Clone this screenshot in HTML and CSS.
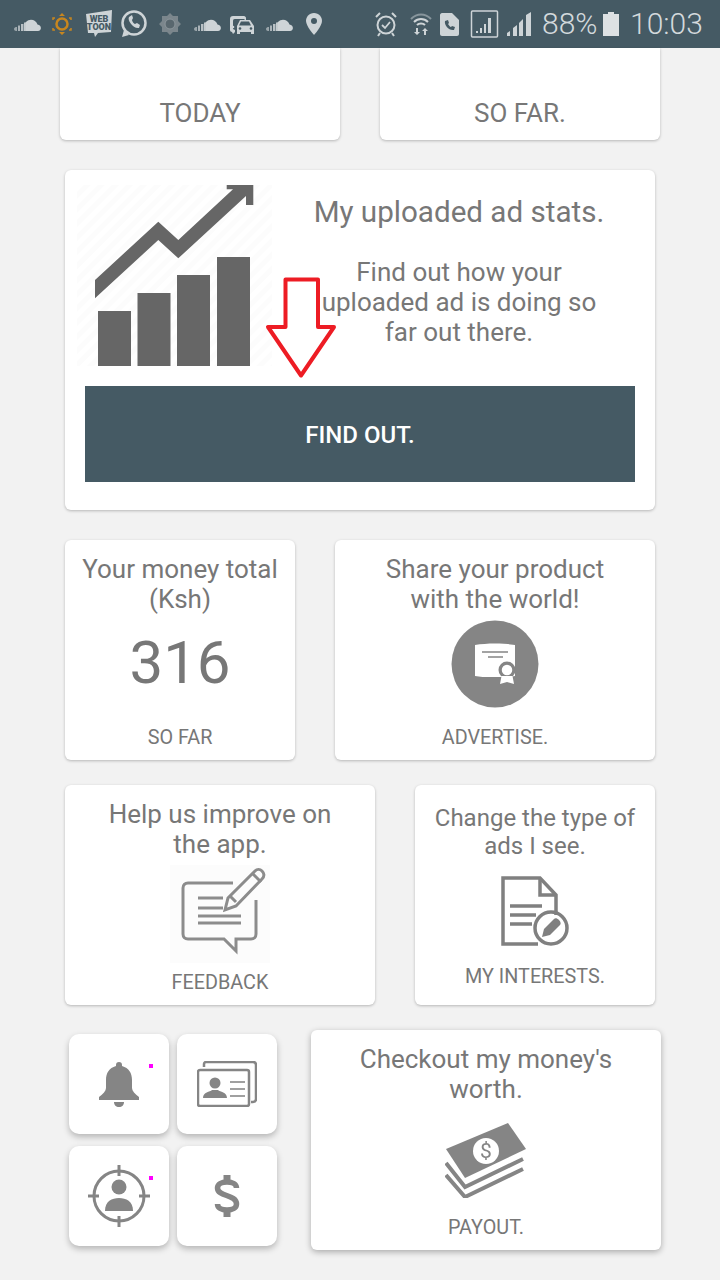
FILE: index.html
```html
<!DOCTYPE html>
<html>
<head>
    <title>Dashboard</title>
    <link rel="stylesheet" href="styles.css">
</head>
<body>
    <div class="status-bar">
        <svg class="status-left" width="330" height="48" viewBox="0 0 330 48">
            <defs>
                <g id="cloud">
                    <path d="M10 12h14c4 0 4-6-.5-6.500C22 1 16-1 12 3c-1 1-2 3-2 4z" fill="#ced4d7"/>
                    <path d="M0 10c0-1 1-2 2-2h1v4H2c-1 0-2-1-2-2z" fill="#9aa5aa"/>
                    <path d="M4 6.500h2V12H4z" fill="#aab3b8"/>
                    <path d="M7 5h2.500v7H7z" fill="#b8c0c4"/>
                    <path d="M10 3.500h2V12h-2z" fill="#c4cbce"/>
                </g>
            </defs>
            <use href="#cloud" x="14" y="19"/>
            <g fill="none" stroke="#c8861e">
                <circle cx="62" cy="24" r="5.500" stroke-width="2.500"/>
                <path d="M53 20v-2h2M71 20v-2h-2M53 28v2h2M71 28v2h-2" stroke-width="1.500"/>
            </g>
            <path d="M62 13l3 3h-6zM62 35l3-3h-6z" fill="#c8861e"/>
            <path d="M86 14l26-4-1 22-13 1-3 4-1-4-6 0z" fill="#ced4d7"/>
            <text class="toon" x="99" y="22" text-anchor="middle">WEB</text>
            <text class="toon" x="99" y="30" text-anchor="middle">TOON</text>
            <circle cx="134" cy="23" r="11.500" fill="none" stroke="#ced4d7" stroke-width="2.500"/>
            <path d="M122 37l2-7 5 5z" fill="#ced4d7"/>
            <path d="M129 17c-2 3 4 12 10 11l1-3-3-2-2 1c-1 0-3-3-3-4l1-2-1-3z" fill="#ced4d7"/>
            <path d="M170 13l3 3h5v5l3 3-3 3v5h-5l-3 3-3-3h-5v-5l-3-3 3-3v-5h5z" fill="#7b868c"/>
            <circle cx="170" cy="24" r="5" fill="#59676e" stroke="#8d979c" stroke-width="1"/>
            <use href="#cloud" x="194" y="19"/>
            <path d="M246 20v-2c0-1-1-2-2-2h-11c-2 0-3 1-3 3v11c0 1 1 2 2 2l1 2 2-2v-2l-2-1V22c0-2 0-3 2-3h9l1 1z" fill="#ced4d7"/>
            <circle cx="233" cy="27" r="1.300" fill="#ced4d7"/>
            <path d="M237 34v-8l3-6h10l4 6v8h-3v-2h-11v2z" fill="#ced4d7"/>
            <path d="M241 21.500h8l2 4h-12z" fill="#455a64"/>
            <circle cx="240" cy="28.500" r="1.300" fill="#455a64"/>
            <circle cx="251" cy="28.500" r="1.300" fill="#455a64"/>
            <use href="#cloud" x="266" y="19"/>
            <path d="M314 13c-5 0-8 4-8 8 0 5 8 14 8 14s8-9 8-14c0-4-3-8-8-8z" fill="#ced4d7"/>
            <circle cx="314" cy="21" r="3" fill="#455a64"/>
        </svg>
        <svg class="status-icons" width="162" height="48" viewBox="375 0 162 48">
            <circle cx="386" cy="25" r="8.500" fill="none" stroke="#ced4d7" stroke-width="2"/>
            <path d="M382 25l3 3 5-6" fill="none" stroke="#ced4d7" stroke-width="1.800"/>
            <path d="M376 17l4-4M396 17l-4-4M380 33l-2 3M392 33l2 3" stroke="#ced4d7" stroke-width="2"/>
            <path d="M411 19c6-6 14-6 20 0" fill="none" stroke="#87959c" stroke-width="2"/>
            <path d="M414 22c4-4 10-4 14 0M417 25c2-2 6-2 8 0" fill="none" stroke="#ced4d7" stroke-width="2"/>
            <path d="M416 28h2v4h2l-3 3-3-3h2zM424 35h2v-4h2l-3-3-3 3h2z" fill="#ced4d7"/>
            <path d="M442 13h10l7 7v14c0 1-1 2-2 2h-15c-1 0-2-1-2-2V15c0-1 1-2 2-2z" fill="#ced4d7"/>
            <path d="M445 21c-1 4 4 10 9 9l1-3-3-1-1 1c-1 0-2-2-3-3l1-1-1-3z" fill="#455a64"/>
            <rect x="471.500" y="11" width="26" height="26" rx="1" fill="none" stroke="#ced4d7" stroke-width="1.500"/>
            <path d="M476 33h2v-2h-2zM480 33h2v-5h-2zM484 33h2v-9h-2zM488 33h3V18h-3z" fill="#ced4d7"/>
            <path d="M507 36v-3l3-2v5zM513 36v-8l4-3v11zM519 36V23l4-4v17zM526 36V15l5-3v24z" fill="#ced4d7"/>
        </svg>
        <span class="status-text battery-text">88%</span>
        <svg class="battery" width="16" height="24" viewBox="0 0 16 24">
            <path d="M5 0h6v2h5v22H0V2h5z" fill="#dde1e3"/>
        </svg>
        <span class="status-text clock">10:03</span>
    </div>

    <div class="page">
        <div class="row row-top">
            <div class="card top-card"><span class="label-large">TODAY</span></div>
            <div class="card top-card"><span class="label-large">SO FAR.</span></div>
        </div>

        <div class="card stats-card">
            <div class="stats-head">
                <svg class="chart" width="195" height="181" viewBox="77 185 195 181">
                    <defs>
                        <pattern id="hatch" width="10" height="10" patternUnits="userSpaceOnUse" patternTransform="rotate(45)">
                            <rect width="5" height="10" fill="#fcfcfc"/>
                        </pattern>
                    </defs>
                    <rect x="77" y="185" width="195" height="181" fill="url(#hatch)"/>
                    <path d="M98 311h33v55H98zM137.500 293h33v73h-33zM177 275h33v91h-33zM217 257h33v109h-33z" fill="#666"/>
                    <path d="M95 280l63.300-58.300 20 18.300 54.700-50.700h-6.300V184h26.600v21H246v-9l-67.700 62.300-20-18.300L95 298.300z" fill="#666"/>
                </svg>
                <div class="stats-text">
                    <h2 class="stats-title">My uploaded ad stats.</h2>
                    <p class="stats-desc">Find out how your uploaded ad is doing so far out there.</p>
                </div>
            </div>
            <div class="find-btn">FIND OUT.</div>
            <svg class="red-arrow" width="74" height="108" viewBox="265 274 74 108">
                <path d="M285.500 279.500h32.500v47.500h16l-33 48.500-33-48.500h17.500z" fill="none" stroke="#ed1c24" stroke-width="4" stroke-linejoin="round"/>
            </svg>
        </div>

        <div class="row row-money">
            <div class="card tile money-tile">
                <div class="tile-title">Your money total (Ksh)</div>
                <div class="money-value">316</div>
                <div class="label">SO FAR</div>
            </div>
            <div class="card tile share-tile">
                <div class="tile-title">Share your product with the world!</div>
                <svg class="tile-icon soft" width="88" height="88" viewBox="0 0 88 88">
                    <circle cx="44" cy="44" r="43.500" fill="#858585"/>
                    <path d="M24 25c12-2 28-2 40 0v31c-4 1-8 1-12 1H40c-6 0-11 0-16-1z" fill="#fff"/>
                    <path d="M31 32h26" stroke="#858585" stroke-width="1.500"/>
                    <path d="M37 37h15" stroke="#858585" stroke-width="1.500"/>
                    <circle cx="56" cy="50" r="8.500" fill="#858585"/>
                    <circle cx="56" cy="50" r="6" fill="#fff" stroke="#858585" stroke-width="1.500"/>
                    <path d="M50.500 56h11l1.500 8-7-2-7 2z" fill="#fff"/>
                </svg>
                <div class="label">ADVERTISE.</div>
            </div>
        </div>

        <div class="row row-help">
            <div class="card tile help-tile">
                <div class="tile-title">Help us improve on the app.</div>
                <svg class="tile-icon soft" width="100" height="98" viewBox="0 0 100 98">
                    <rect width="100" height="98" fill="#fcfcfc"/>
                    <g fill="none" stroke="#8c8c8c" stroke-width="3">
                        <path d="M63 18H18c-3 0-5 2-5 5v46c0 3 2 5 5 5h36l12 12V74h15c3 0 5-2 5-5V35"/>
                        <path d="M28 33h25M28 43h25M28 51h43M28 58h43"/>
                        <path d="M55 45l3-12 27-27c2-2 5-2 7 0s3 5 0 8L66 41z"/>
                        <path d="M60 31l6 6M83 9l8 8"/>
                    </g>
                </svg>
                <div class="label">FEEDBACK</div>
            </div>
            <div class="card tile interest-tile">
                <div class="tile-title">Change the type of ads I see.</div>
                <svg class="tile-icon soft" width="70" height="72" viewBox="0 0 70 72">
                    <g fill="none" stroke="#808080" stroke-width="3.500">
                        <path d="M38 69H3V3h37l16 17v20"/>
                        <path d="M40 3v17h16"/>
                        <path d="M10 31h32M10 40h26M10 49h22"/>
                        <circle cx="51" cy="53" r="16"/>
                    </g>
                    <path d="M42 62l2-8 10-10c1-1 3-1 5 1s2 4 1 5L50 60z" fill="#808080"/>
                </svg>
                <div class="label">MY INTERESTS.</div>
            </div>
        </div>

        <div class="row row-bottom">
            <div class="mini-grid">
                <div class="card mini-card">
                    <svg class="soft" width="40" height="46" viewBox="0 0 40 46">
                        <path d="M20 1c2 0 3 1 3 3v1c7 2 10 7 10 14v8c0 3 3 6 7 9v3H0v-3c4-3 7-6 7-9v-8c0-7 3-12 10-14V4c0-2 1-3 3-3z" fill="#858585"/>
                        <path d="M15 41h10c0 3-2 5-5 5s-5-2-5-5z" fill="#858585"/>
                    </svg>
                    <span class="dot"></span>
                </div>
                <div class="card mini-card">
                    <svg class="soft" width="60" height="46" viewBox="0 0 60 46">
                        <g fill="none" stroke="#858585" stroke-width="2.500">
                            <path d="M7 6V3c0-1 1-2 2-2h47c2 0 3 1 3 3v34c0 2-1 3-3 3h-2"/>
                            <rect x="1" y="9" width="51" height="36" rx="2"/>
                        </g>
                        <circle cx="18" cy="22" r="5.500" fill="#858585"/>
                        <path d="M6 37c0-6 7-6 9-8h6c2 2 9 2 9 8z" fill="#858585"/>
                        <path d="M33 21h15M33 28h15M33 35h15" stroke="#a0a0a0" stroke-width="2"/>
                    </svg>
                </div>
                <div class="card mini-card">
                    <svg class="soft" width="62" height="62" viewBox="0 0 62 62">
                        <g fill="none" stroke="#858585" stroke-width="3">
                            <circle cx="31" cy="31" r="25"/>
                            <path d="M31 0v11M31 51v11M0 31h11M51 31h11"/>
                        </g>
                        <circle cx="31" cy="22" r="7.500" fill="#858585"/>
                        <path d="M17 46c0-10 7-13 14-13s14 3 14 13z" fill="#858585"/>
                    </svg>
                    <span class="dot"></span>
                </div>
                <div class="card mini-card">
                    <svg class="soft" width="26" height="42" viewBox="0 0 26 42">
                        <path d="M22.500 13c0-4-4-6-9.500-6S3.500 9 3.500 13c0 9 19 6 19 16 0 4-4 6-9.500 6s-9.500-2-9.500-6" fill="none" stroke="#858585" stroke-width="5.500"/>
                        <path d="M9.500 0h7v7h-7zM9.500 35h7v7h-7z" fill="#858585"/>
                    </svg>
                </div>
            </div>
            <div class="card tile payout-tile">
                <div class="tile-title">Checkout my money's worth.</div>
                <svg class="tile-icon soft" width="82" height="76" viewBox="0 0 82 76">
                    <path d="M1 27L63 1l18 26-61 29z" fill="#858585"/>
                    <path d="M1 41l19 24 58-28M1 53l19 22 58-28" fill="none" stroke="#858585" stroke-width="4"/>
                    <ellipse cx="41" cy="29" rx="13" ry="13" fill="#fff"/>
                    <text class="bill" x="41" y="36" text-anchor="middle">$</text>
                </svg>
                <div class="label">PAYOUT.</div>
            </div>
        </div>
    </div>
</body>
</html>
```

FILE: styles.css
```css
* {
    box-sizing: border-box;
}

html, body {
    margin: 0;
    padding: 0;
}

body {
    width: 720px;
    height: 1280px;
    overflow: hidden;
    background-color: #f2f2f2;
    font-family: Roboto, "Noto Sans", sans-serif;
    color: #777777;
}

/* Status bar */
.status-bar {
    height: 48px;
    background-color: #455a64;
    display: flex;
    align-items: center;
    color: #d3d9dc;
}

.status-left {
    margin-right: 45px;
}

.toon {
    font-family: Roboto, sans-serif;
    font-size: 9px;
    font-weight: 900;
    fill: #455a64;
}

.status-text {
    font-size: 30px;
    font-weight: 300;
    line-height: 48px;
}

.battery-text {
    margin-left: 5px;
    width: 61px;
}

.battery {
    flex: none;
}

.clock {
    margin-left: 11px;
}

/* Cards */
.card {
    background-color: #ffffff;
    border-radius: 6px;
    box-shadow: 0 1px 3px rgba(0, 0, 0, 0.25);
}

.row {
    display: flex;
}

.row-top {
    padding: 0 60px;
    gap: 40px;
}

.top-card {
    flex: 1;
    height: 92px;
    border-radius: 0 0 6px 6px;
    display: flex;
    align-items: flex-end;
    justify-content: center;
    padding-bottom: 12px;
}

.label-large {
    font-size: 26px;
    line-height: 30px;
}

/* Uploaded ad stats */
.stats-card {
    position: relative;
    margin: 30px 65px 0;
    height: 340px;
    padding: 15px 20px 0;
}

.stats-head {
    display: flex;
    height: 201px;
}

.chart {
    flex: none;
    margin-left: -8px;
}

.stats-text {
    flex: 1;
    margin-right: -11px;
    text-align: center;
}

.stats-title {
    margin: 9px 0 0;
    font-size: 29.600px;
    font-weight: 400;
    line-height: 36px;
}

.stats-desc {
    width: 300px;
    margin: 27px auto 0;
    font-size: 26px;
    line-height: 30px;
}

.find-btn {
    height: 96px;
    background-color: #455a64;
    color: #ffffff;
    font-size: 24px;
    font-weight: 500;
    line-height: 98px;
    text-align: center;
}

.red-arrow {
    position: absolute;
    left: 200px;
    top: 104px;
}

/* Tiles */
.tile {
    height: 220px;
    padding: 14px 12px 9px;
    display: flex;
    flex-direction: column;
    align-items: center;
    text-align: center;
}

.tile-title {
    font-size: 26px;
    line-height: 30px;
}

.tile-icon {
    flex: none;
}

/* the icons in the app are scaled bitmaps */
.soft {
    filter: blur(0.5px);
}

.label {
    margin-top: auto;
    font-size: 19.800px;
    line-height: 26px;
}

.row-money {
    margin: 30px 65px 0;
    gap: 40px;
}

.money-tile {
    width: 230px;
}

.money-value {
    margin-top: 14px;
    font-size: 60px;
    line-height: 70px;
}

.share-tile {
    width: 320px;
}

.share-tile .tile-title {
    width: 240px;
}

.share-tile .tile-icon {
    margin-top: 6px;
}

.row-help {
    margin: 25px 65px 0;
    gap: 40px;
}

.help-tile {
    width: 310px;
}

.help-tile .tile-title {
    width: 240px;
}

.help-tile .tile-icon {
    margin-top: 6px;
}

.interest-tile {
    width: 240px;
    padding-top: 19px;
    padding-bottom: 15px;
}

.interest-tile .tile-title {
    width: 210px;
    font-size: 24px;
    line-height: 28px;
}

.interest-tile .tile-icon {
    margin-top: 15px;
}

.row-bottom {
    margin: 25px 59px 0 69px;
    align-items: flex-start;
}

.mini-grid {
    margin-top: 4px;
    display: grid;
    grid-template-columns: 100px 100px;
    grid-auto-rows: 100px;
    column-gap: 8px;
    row-gap: 12px;
}

.mini-card {
    position: relative;
    display: flex;
    align-items: center;
    justify-content: center;
    border-radius: 10px;
    box-shadow: 0 3px 6px rgba(0, 0, 0, 0.25);
}

.dot {
    position: absolute;
    left: 80px;
    top: 30px;
    width: 4px;
    height: 4px;
    background-color: #ff00ff;
}

.payout-tile {
    width: 350px;
    margin-left: 34px;
    box-shadow: 0 2px 6px rgba(0, 0, 0, 0.3);
}

.payout-tile .tile-title {
    width: 280px;
}

.payout-tile .tile-icon {
    margin-top: 18px;
}

.bill {
    font-family: Roboto, sans-serif;
    font-size: 21px;
    fill: #858585;
}
```
